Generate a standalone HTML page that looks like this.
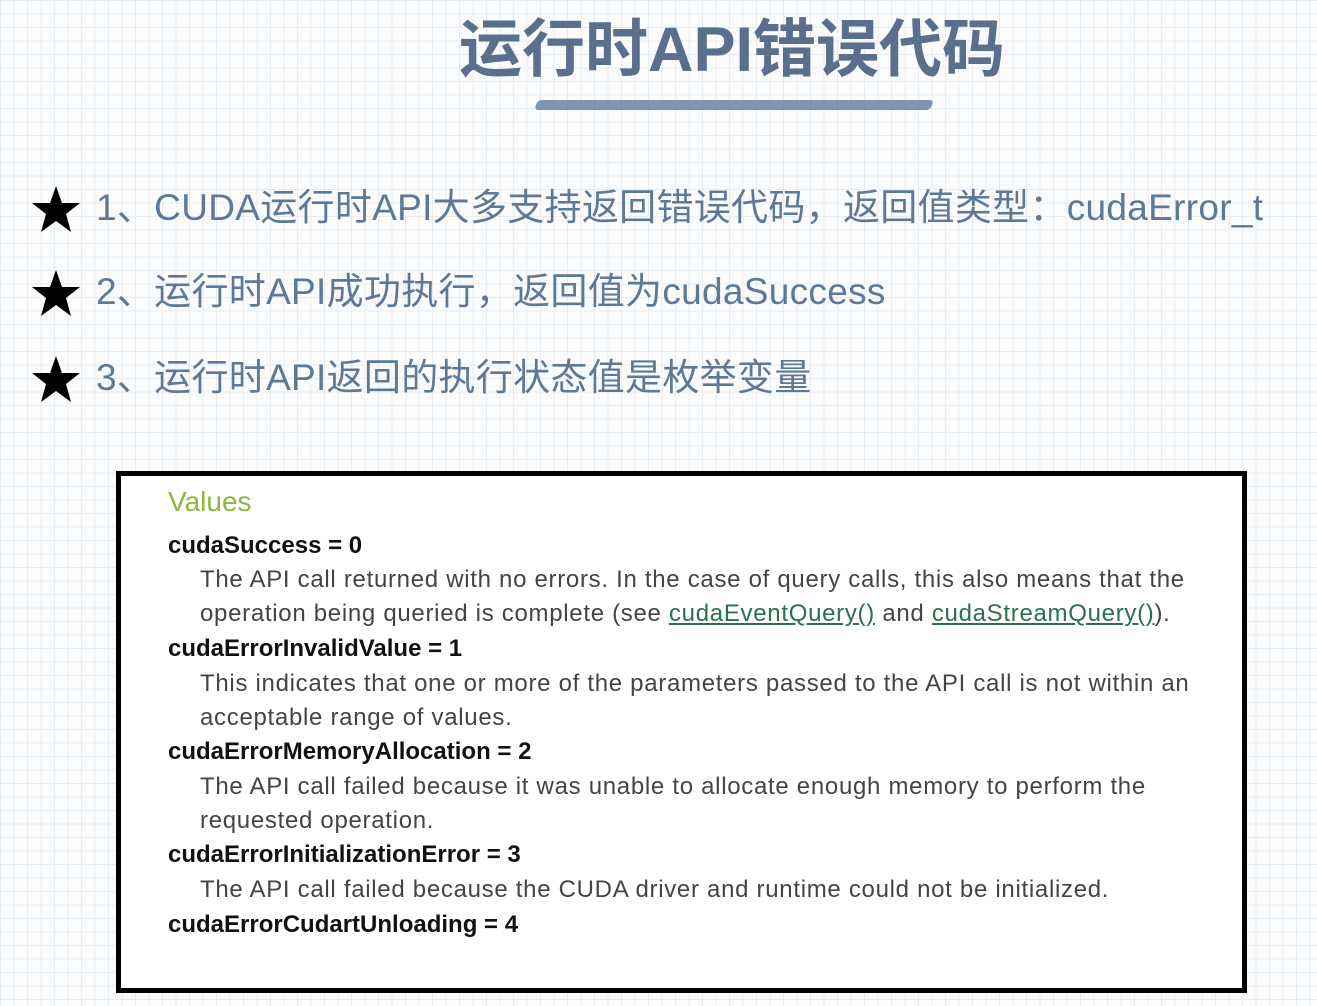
<!DOCTYPE html>
<html><head><meta charset="utf-8"><style>
html,body{margin:0;padding:0}
body{width:1317px;height:1006px;position:relative;overflow:hidden;background-color:#fafbfc;
background-image:linear-gradient(#e9ecef 1px,transparent 1px),linear-gradient(90deg,#e9ecef 1px,transparent 1px);background-size:13.5px 13.5px;
font-family:"Liberation Sans","Noto Sans CJK SC",sans-serif}
.title{position:absolute;left:0;width:1464px;top:12px;text-align:center;font-size:63px;font-weight:bold;color:#5a6f8c;letter-spacing:0;line-height:76px}
.brush{position:absolute;left:536px;top:100px;width:396px;height:10px;background:#6c83a0;border-radius:4px;opacity:.85;transform:skewX(-20deg)}
.b{position:absolute;left:30px;font-size:37px;color:#5e7995;white-space:nowrap;line-height:40px;letter-spacing:0.3px}
.b svg{position:absolute;left:0;top:-4px}
.b span{position:absolute;left:66px;top:0}
.box{position:absolute;left:116px;top:471px;width:1121px;height:512px;border:5px solid #000;background:#fff}
.box div{position:absolute;white-space:nowrap;font-size:24px}
.h{left:47px;color:#8cb73f}
.k{left:47px;font-weight:bold;color:#111}
.t{left:79px;color:#444;letter-spacing:0.7px}
a{color:#2b6f4d;text-decoration:underline}
</style></head><body>
<div class="title">运行时API错误代码</div>
<div class="brush"></div>
<div class="b" style="top:188px"><svg width="52" height="50" viewBox="0 0 50 50"><polygon points="25,2 31,19 49,19 35,30 40,48 25,37 10,48 15,30 1,19 19,19" fill="#000"/></svg><span>1、CUDA运行时API大多支持返回错误代码，返回值类型：cudaError_t</span></div>
<div class="b" style="top:272px"><svg width="52" height="50" viewBox="0 0 50 50"><polygon points="25,2 31,19 49,19 35,30 40,48 25,37 10,48 15,30 1,19 19,19" fill="#000"/></svg><span>2、运行时API成功执行，返回值为cudaSuccess</span></div>
<div class="b" style="top:358px"><svg width="52" height="50" viewBox="0 0 50 50"><polygon points="25,2 31,19 49,19 35,30 40,48 25,37 10,48 15,30 1,19 19,19" fill="#000"/></svg><span>3、运行时API返回的执行状态值是枚举变量</span></div>
<div class="box">
<div class="h" style="top:10px;font-size:28px">Values</div>
<div class="k" style="top:56px">cudaSuccess = 0</div>
<div class="t" style="top:90px">The API call returned with no errors. In the case of query calls, this also means that the</div>
<div class="t" style="top:124px">operation being queried is complete (see <a>cudaEventQuery()</a> and <a>cudaStreamQuery()</a>).</div>
<div class="k" style="top:159px">cudaErrorInvalidValue = 1</div>
<div class="t" style="top:194px">This indicates that one or more of the parameters passed to the API call is not within an</div>
<div class="t" style="top:228px">acceptable range of values.</div>
<div class="k" style="top:262px">cudaErrorMemoryAllocation = 2</div>
<div class="t" style="top:297px">The API call failed because it was unable to allocate enough memory to perform the</div>
<div class="t" style="top:331px">requested operation.</div>
<div class="k" style="top:365px">cudaErrorInitializationError = 3</div>
<div class="t" style="top:400px">The API call failed because the CUDA driver and runtime could not be initialized.</div>
<div class="k" style="top:435px">cudaErrorCudartUnloading = 4</div>
</div>
</body></html>
